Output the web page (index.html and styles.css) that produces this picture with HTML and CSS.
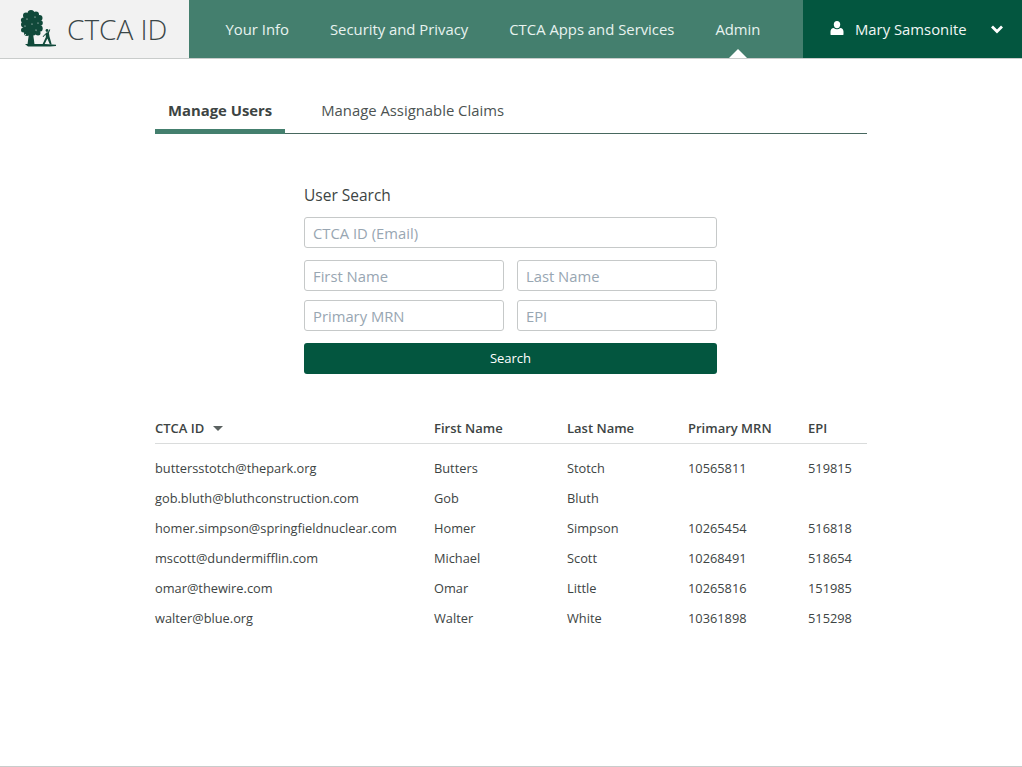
FILE: index.html
```html
<!DOCTYPE html>
<html lang="en">
<head>
    <meta charset="UTF-8">
    <meta name="viewport" content="width=device-width, initial-scale=1.0">
    <title>CTCA ID - Manage Users</title>
    <link rel="stylesheet" href="styles.css">
</head>
<body>
    <div class="navbar">
        <div class="brand">
            <svg class="brand-logo" width="38" height="38" viewBox="0 0 38 38" fill="#10493a">
                <circle cx="11" cy="3.500" r="3.500"/>
                <circle cx="6" cy="5.500" r="3"/>
                <circle cx="16" cy="4.500" r="3"/>
                <circle cx="3.500" cy="10" r="2.600"/>
                <circle cx="19.500" cy="8" r="3"/>
                <circle cx="4" cy="14.500" r="3"/>
                <circle cx="20" cy="13" r="2.800"/>
                <circle cx="3.500" cy="20" r="2.500"/>
                <circle cx="19.500" cy="18.500" r="3.200"/>
                <circle cx="7" cy="23" r="3"/>
                <circle cx="13" cy="22" r="3.500"/>
                <circle cx="18" cy="23" r="2.500"/>
                <circle cx="11.500" cy="13" r="9.500"/>
                <circle cx="7" cy="9" r=".6" fill="#f2f2f2"/>
                <circle cx="15" cy="7" r=".6" fill="#f2f2f2"/>
                <circle cx="18" cy="13" r=".6" fill="#f2f2f2"/>
                <circle cx="5" cy="16" r=".6" fill="#f2f2f2"/>
                <circle cx="12" cy="14" r=".6" fill="#f2f2f2"/>
                <circle cx="16" cy="20" r=".6" fill="#f2f2f2"/>
                <circle cx="5.500" cy="24.500" r=".5" fill="#f2f2f2"/>
                <path d="M9 23h4l1.500 11.500h-7z"/>
                <path d="M5 34h20l11 .7v1.300l-6 .5H8z"/>
                <path d="M26.500 22.500l1.300-.3 1.700-3 .8.300-1.400 3.500.6 3.500 2.200 8h-1.800l-2.500-6-3 6h-2l3.500-7.500-.3-2.500-2.200 2.500-.8-.6z"/>
                <circle cx="27" cy="20.500" r="1.400"/>
            </svg>
            <span class="brand-name">CTCA ID</span>
        </div>
        <div class="nav-links">
            <a class="nav-link">Your Info</a>
            <a class="nav-link">Security and Privacy</a>
            <a class="nav-link">CTCA Apps and Services</a>
            <a class="nav-link active">Admin</a>
        </div>
        <div class="user-menu">
            <svg class="user-icon" width="14" height="14" viewBox="0 0 14 14" fill="#fff">
                <ellipse cx="7" cy="3.600" rx="3.200" ry="3.600"/>
                <path d="M0.500 13.500v-3c0-2 1.300-3.300 3.200-3.500 1 .8 2.100 1.200 3.300 1.200s2.300-.4 3.300-1.200c1.900.2 3.200 1.500 3.200 3.500v3c0 .3-.2.500-.5.500H1c-.3 0-.5-.2-.5-.5z"/>
            </svg>
            <span class="user-name">Mary Samsonite</span>
            <svg class="user-caret" width="14" height="10" viewBox="0 0 14 10">
                <path d="M2 2.500l5 5 5-5" fill="none" stroke="#fff" stroke-width="2.800"/>
            </svg>
        </div>
    </div>

    <div class="content">
        <div class="tabs">
            <a class="tab active">Manage Users</a>
            <a class="tab">Manage Assignable Claims</a>
        </div>

        <form class="search-form">
            <h2 class="search-title">User Search</h2>
            <input type="text" class="search-input" placeholder="CTCA ID (Email)">
            <div class="search-row first">
                <input type="text" class="search-input" placeholder="First Name">
                <input type="text" class="search-input" placeholder="Last Name">
            </div>
            <div class="search-row">
                <input type="text" class="search-input" placeholder="Primary MRN">
                <input type="text" class="search-input" placeholder="EPI">
            </div>
            <button type="button" class="search-button">Search</button>
        </form>

        <div class="results">
            <div class="results-row results-head">
                <span>CTCA ID <i class="sort-arrow"></i></span>
                <span>First Name</span>
                <span>Last Name</span>
                <span>Primary MRN</span>
                <span>EPI</span>
            </div>
            <div class="results-body">
                <div class="results-row">
                    <span>buttersstotch@thepark.org</span><span>Butters</span><span>Stotch</span><span>10565811</span><span>519815</span>
                </div>
                <div class="results-row">
                    <span>gob.bluth@bluthconstruction.com</span><span>Gob</span><span>Bluth</span><span></span><span></span>
                </div>
                <div class="results-row">
                    <span>homer.simpson@springfieldnuclear.com</span><span>Homer</span><span>Simpson</span><span>10265454</span><span>516818</span>
                </div>
                <div class="results-row">
                    <span>mscott@dundermifflin.com</span><span>Michael</span><span>Scott</span><span>10268491</span><span>518654</span>
                </div>
                <div class="results-row">
                    <span>omar@thewire.com</span><span>Omar</span><span>Little</span><span>10265816</span><span>151985</span>
                </div>
                <div class="results-row">
                    <span>walter@blue.org</span><span>Walter</span><span>White</span><span>10361898</span><span>515298</span>
                </div>
            </div>
        </div>
    </div>

    <div class="footer"></div>
</body>
</html>
```

FILE: styles.css
```css
* {
    margin: 0;
    padding: 0;
    box-sizing: border-box;
}

html, body {
    height: 100%;
}

body {
    display: flex;
    flex-direction: column;
    font-family: "Open Sans", Arial, sans-serif;
    color: #3d4443;
    background-color: #fff;
    overflow: hidden;
}

.navbar {
    display: flex;
    height: 59px;
    flex: none;
    border-bottom: 1px solid #c9cccb;
}

.brand {
    display: flex;
    align-items: center;
    width: 189px;
    padding-left: 20px;
    background-color: #f2f2f2;
}

.brand-logo {
    flex: none;
}

.brand-name {
    margin-left: 9px;
    font-size: 28px;
    font-weight: 300;
    color: #3b4648;
}

.nav-links {
    display: flex;
    flex: 1;
    padding-left: 16px;
    background-color: #447f6e;
}

.nav-link {
    position: relative;
    display: flex;
    align-items: center;
    padding: 0 20.500px;
    font-size: 14.850px;
    color: #e8f3f0;
}

.nav-link.active::after {
    content: "";
    position: absolute;
    left: 50%;
    bottom: 0;
    margin-left: -9px;
    border-left: 9px solid transparent;
    border-right: 9px solid transparent;
    border-bottom: 9px solid #fff;
}

.user-menu {
    display: flex;
    align-items: center;
    width: 219px;
    padding-left: 27px;
    background-color: #03563f;
    color: #f2f7f5;
    font-size: 14.850px;
}

.user-icon {
    margin-top: -3px;
}

.user-name {
    margin-left: 11px;
}

.user-caret {
    margin-left: 23px;
}

.content {
    width: 712px;
    margin-left: 155px;
}

.tabs {
    display: flex;
    height: 75px;
    padding-top: 36px;
    border-bottom: 1px solid #47685f;
}

.tab {
    height: 39px;
    padding: 5px 13px 0;
    margin-right: 23px;
    font-size: 14.850px;
    color: #4c5352;
}

.tab.active {
    font-weight: 700;
    color: #3d4443;
    border-bottom: 5px solid #447f6e;
}

.search-form {
    width: 413px;
    margin: 50px 0 0 149px;
}

.search-title {
    margin-bottom: 11px;
    font-size: 15.500px;
    line-height: 22px;
    font-weight: 500;
    color: #3d4443;
}

.search-input {
    display: block;
    width: 100%;
    height: 31px;
    padding: 1px 8px 0;
    font-family: inherit;
    font-size: 14.800px;
    color: #3d4443;
    background-color: #fff;
    border: 1px solid #c6c9c9;
    border-radius: 3px;
}

.search-input::placeholder {
    color: #98a6b2;
    opacity: 1;
}

.search-row {
    display: flex;
    gap: 13px;
    margin-top: 9px;
}

.search-row.first {
    margin-top: 12px;
}

.search-button {
    display: block;
    width: 100%;
    height: 31px;
    margin-top: 12px;
    padding-bottom: 2px;
    font-family: inherit;
    font-size: 13px;
    color: #fff;
    background-color: #03563f;
    border: none;
    border-radius: 3px;
}

.results {
    margin-top: 40px;
    font-size: 12.800px;
}

.results-row {
    display: grid;
    grid-template-columns: 279px 133px 121px 120px 59px;
    height: 30px;
    line-height: 30px;
}

.results-head {
    border-bottom: 1px solid #dadcdc;
    font-size: 13px;
    font-weight: 600;
    line-height: 28px;
}

.results-body {
    padding-top: 9px;
}

.sort-arrow {
    display: inline-block;
    margin-left: 5px;
    vertical-align: 2px;
    border-left: 5px solid transparent;
    border-right: 5px solid transparent;
    border-top: 5px solid #5b6261;
}

.footer {
    flex: none;
    height: 1px;
    margin-top: auto;
    background-color: #c9cccb;
}
```
